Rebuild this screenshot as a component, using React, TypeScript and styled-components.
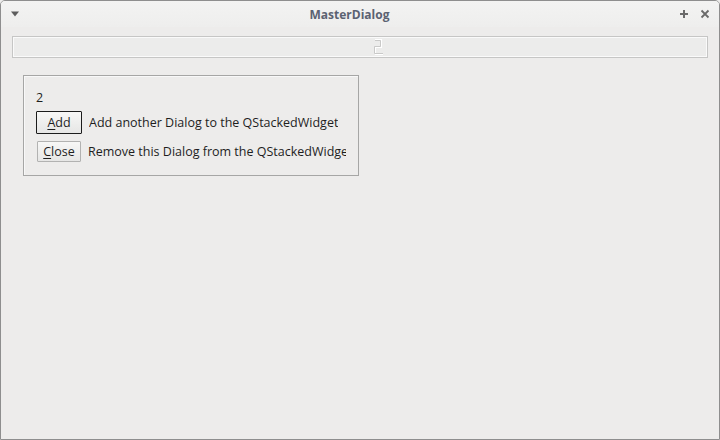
import React from "react";
import styled, { createGlobalStyle } from "styled-components";

const Global = createGlobalStyle`
  html, body { margin: 0; padding: 0; background: #edeceb; }
  body { font-family: "Open Sans", "Noto Sans", sans-serif; }
`;

const Window = styled.div`
  width: 720px;
  height: 440px;
  box-sizing: border-box;
  border: 1px solid #8e8e8e;
  border-radius: 5px 5px 0 0;
  background: #edeceb;
  display: flex;
  flex-direction: column;
  overflow: hidden;
`;

const TitleBar = styled.div`
  height: 26px;
  flex: none;
  display: flex;
  align-items: center;
  padding: 0 9px 0 9px;
  background: linear-gradient(#f3f3f2, #eeeeed);
`;

const Title = styled.div`
  flex: 1;
  text-align: center;
  font-family: "Open Sans", "Noto Sans", sans-serif;
  font-weight: 700;
  font-size: 12px;
  color: #5b6272;
`;

const TitleButtons = styled.div`
  display: flex;
  gap: 11px;
  align-items: center;
`;

const Body = styled.div`
  flex: 1;
  display: flex;
  flex-direction: column;
  padding: 9px 11px 0 11px;
`;

const Stack = styled.div`
  height: 22px;
  box-sizing: border-box;
  border: 1px solid #c6c6c5;
  box-shadow: inset 1px 1px 0 #fafafa, inset -1px -1px 0 #fafafa;
  background: #ececeb;
  display: flex;
  justify-content: center;
  align-items: center;
  padding-left: 38px;
`;

const Group = styled.div`
  margin: 17px 0 0 11px;
  width: 336px;
  height: 101px;
  box-sizing: border-box;
  border: 1px solid #a6a6a5;
  box-shadow: inset 1px 1px 0 #f8f8f8;
  padding: 12px 0 0 12px;
  overflow: hidden;
  display: flex;
  flex-direction: column;
  font-size: 12.5px;
  color: #1e1e1e;
`;

const Count = styled.div`
  height: 20px;
  line-height: 20px;
`;

const Row = styled.div<{ $gap: number }>`
  display: flex;
  align-items: center;
  gap: 7px;
  margin-top: ${(p) => p.$gap}px;
  white-space: nowrap;
`;

const Button = styled.div<{ $default?: boolean }>`
  box-sizing: border-box;
  height: ${(p) => (p.$default ? 23 : 21)}px;
  width: ${(p) => (p.$default ? 46 : 44)}px;
  margin-left: ${(p) => (p.$default ? 0 : 1)}px;
  border: 1px solid ${(p) => (p.$default ? "#1c1c1c" : "#b2b2b1")};
  border-radius: 1px;
  background: linear-gradient(#f7f7f6, #e6e6e5);
  display: flex;
  align-items: center;
  justify-content: center;
  font-size: 12.5px;
  color: #1e1e1e;
  u { text-decoration: underline; text-underline-offset: 2px; }
`;

const Label = styled.span<{ $clip?: number }>`
  font-size: 12.5px;
  overflow: hidden;
  ${(p) => (p.$clip ? `width: ${p.$clip}px;` : "")}
`;

export default function App() {
  return (
    <>
      <Global />
      <Window>
        <TitleBar>
          <svg width="10" height="6" viewBox="0 0 10 6">
            <path d="M1 0.5 H9 L5 5.5 Z" fill="#5d5d5d" />
          </svg>
          <Title>MasterDialog</Title>
          <TitleButtons>
            <svg width="10" height="10" viewBox="0 0 10 10">
              <path d="M5 1 V9 M1 5 H9" stroke="#6a6a6a" strokeWidth="2" />
            </svg>
            <svg width="10" height="10" viewBox="0 0 10 10">
              <path d="M1.5 1.5 L8.5 8.5 M8.5 1.5 L1.5 8.5" stroke="#6a6a6a" strokeWidth="1.8" />
            </svg>
          </TitleButtons>
        </TitleBar>
        <Body>
          <Stack>
            <svg width="10" height="18" viewBox="0 0 10 18">
              <path
                d="M1 1.5 H7.5 V9.5 H1.5 V16.5 H9"
                fill="none"
                stroke="#ffffff"
                strokeWidth="1.2"
              />
              <path
                d="M1 2.5 H6.5 V8.5 H0.5 V15.5 H9"
                fill="none"
                stroke="#c9c9c8"
                strokeWidth="1"
              />
            </svg>
          </Stack>
          <Group>
            <Count>2</Count>
            <Row $gap={3}>
              <Button $default>
                <span><u>A</u>dd</span>
              </Button>
              <Label>Add another Dialog to the QStackedWidget</Label>
            </Row>
            <Row $gap={7}>
              <Button>
                <span><u>C</u>lose</span>
              </Button>
              <Label $clip={258}>Remove this Dialog from the QStackedWidget</Label>
            </Row>
          </Group>
        </Body>
      </Window>
    </>
  );
}
